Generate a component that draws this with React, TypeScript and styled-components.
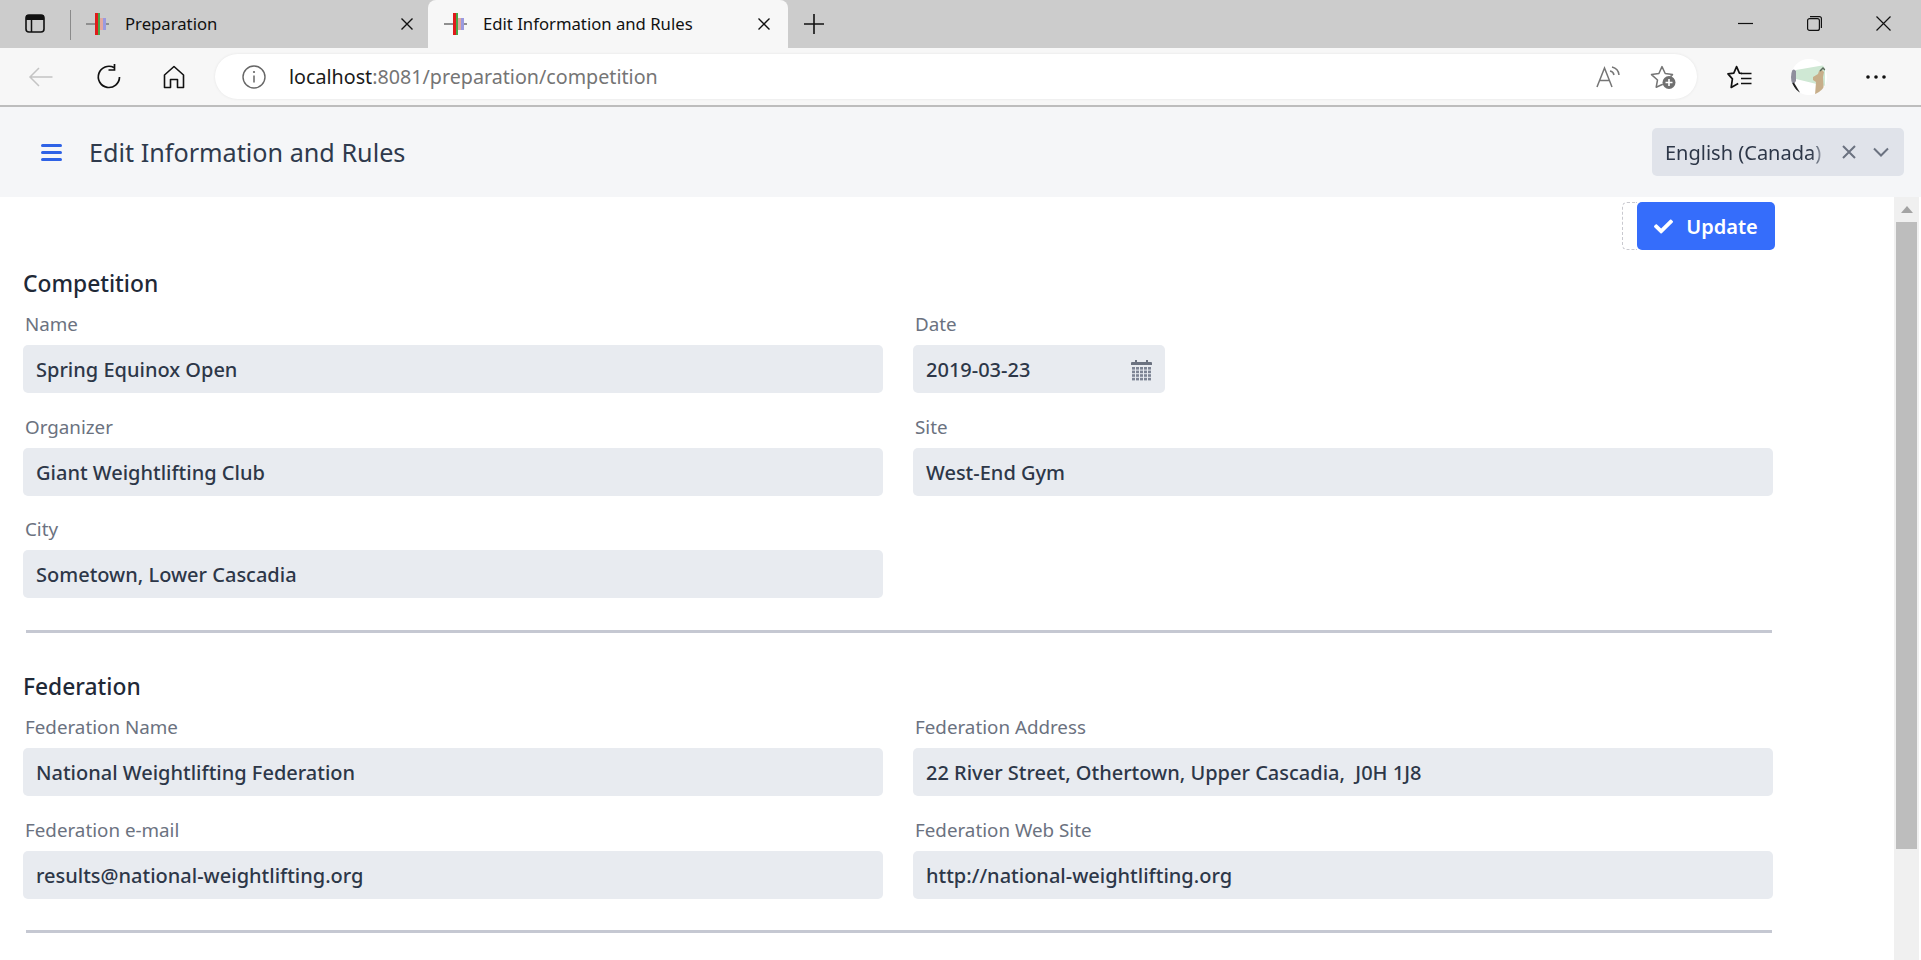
import React from "react";
import styled, { createGlobalStyle } from "styled-components";
import { FaCheck } from "react-icons/fa";

const uiFont = `"Noto Sans", "Open Sans", sans-serif`;

const GlobalStyle = createGlobalStyle`
  html, body {
    margin: 0;
    padding: 0;
    background: #fff;
    overflow: hidden;
  }
  * {
    box-sizing: border-box;
  }
`;

const Page = styled.div`
  width: 100%;
  height: 960px;
  display: flex;
  flex-direction: column;
  overflow: hidden;
  font-family: ${uiFont};
`;

/* ---- browser chrome ---- */

const TabStrip = styled.div`
  height: 48px;
  flex: none;
  display: flex;
  align-items: stretch;
  background: #cccccc;
  padding-left: 25px;
`;

const ChromeGlyph = styled.svg<{ $w: number; $h: number }>`
  width: ${(p) => p.$w}px;
  height: ${(p) => p.$h}px;
  flex: none;
  display: block;
`;

const SidebarSlot = styled.div`
  display: flex;
  align-items: center;
  width: 45px;
  position: relative;
  top: -1px;
`;

const TabDivider = styled.div`
  width: 1px;
  height: 30px;
  margin-top: 10px;
  background: #8a8a8a;
`;

const Tab = styled.div<{ $active?: boolean }>`
  display: flex;
  align-items: center;
  height: 48px;
  border-radius: 8px 8px 0 0;
  background: ${(p) => (p.$active ? "#f7f7f7" : "transparent")};
  width: ${(p) => (p.$active ? "360px" : "357px")};
  padding-left: ${(p) => (p.$active ? "16px" : "15px")};
  color: #111;
  font-size: 16.7px;
`;

const TabTitle = styled.span<{ $width: number }>`
  margin-left: 15px;
  width: ${(p) => p.$width}px;
  white-space: nowrap;
  position: relative;
  top: -1px;
`;

const NewTab = styled.div`
  display: flex;
  align-items: center;
  padding-left: 15px;
`;

const WindowControls = styled.div`
  margin-left: auto;
  display: flex;
  align-items: center;
  width: 195px;
  padding-left: 12px;
  gap: 54px;
  position: relative;
  top: -1px;
`;

const Toolbar = styled.div`
  height: 59px;
  flex: none;
  display: flex;
  align-items: flex-start;
  background: #f7f7f7;
  border-bottom: 2px solid #bdbdbd;
  padding-left: 28px;
  padding-top: 6px;
`;

const NavButton = styled.div<{ $w: number }>`
  width: ${(p) => p.$w}px;
  height: 45px;
  flex: none;
  display: flex;
  align-items: center;
`;

const AddressBar = styled.div`
  width: 1482px;
  height: 45px;
  flex: none;
  display: flex;
  align-items: center;
  background: #fff;
  border-radius: 23px;
  padding-left: 27px;
  box-shadow: 0 0 3px rgba(0, 0, 0, 0.08);
`;

const UrlText = styled.div`
  margin-left: 23px;
  font-size: 19.7px;
  color: #757575;
  white-space: nowrap;
  flex: 1;
  b {
    font-weight: 400;
    color: #1a1a1a;
  }
`;

const AddressActions = styled.div`
  display: flex;
  align-items: center;
  gap: 30px;
  padding-right: 21px;
`;

const ToolbarRight = styled.div`
  display: flex;
  align-items: center;
  height: 45px;
  padding-left: 30px;
  gap: 39px;
`;

const Avatar = styled.svg`
  width: 36px;
  height: 36px;
  flex: none;
  display: block;
`;

/* ---- app header ---- */

const AppHeader = styled.header`
  height: 90px;
  flex: none;
  display: flex;
  align-items: center;
  background: #f5f6f8;
  padding: 0 17px 0 41px;
`;

const Burger = styled.div`
  width: 21px;
  height: 17px;
  flex: none;
  display: flex;
  flex-direction: column;
  justify-content: space-between;
  span {
    display: block;
    height: 3px;
    border-radius: 2px;
    background: #2e62e6;
  }
`;

const PageTitle = styled.h1`
  margin: 0 0 0 27px;
  font-size: 25.2px;
  line-height: 32px;
  font-weight: 400;
  color: #2f3a4c;
  white-space: nowrap;
`;

const LanguageSelect = styled.div`
  margin-left: auto;
  width: 252px;
  height: 48px;
  display: flex;
  align-items: center;
  background: #e0e3ea;
  border-radius: 5px;
  padding-left: 13px;
  color: #2d3748;
`;

const LanguageText = styled.span`
  width: 159px;
  flex: none;
  padding-top: 1px;
  font-size: 20px;
  white-space: nowrap;
  overflow: hidden;
  -webkit-mask-image: linear-gradient(to right, #000 92%, rgba(0, 0, 0, 0.25));
  mask-image: linear-gradient(to right, #000 92%, rgba(0, 0, 0, 0.25));
`;

const SelectIcons = styled.div`
  display: flex;
  align-items: center;
  gap: 17px;
  padding-left: 18px;
`;

/* ---- page body ---- */

const Body = styled.div`
  flex: 1;
  min-height: 0;
  display: flex;
`;

const Content = styled.main`
  flex: 1;
  min-width: 0;
  padding: 5px 0 0 23px;
`;

const Actions = styled.div`
  width: 1752px;
  display: flex;
  justify-content: flex-end;
`;

const DashedSlot = styled.div`
  width: 15px;
  height: 48px;
  border: 1px dashed #c9c9cf;
  border-right: none;
  border-radius: 5px 0 0 5px;
`;

const UpdateButton = styled.button`
  width: 138px;
  height: 48px;
  display: flex;
  align-items: center;
  justify-content: center;
  gap: 13px;
  border: none;
  border-radius: 5px;
  background: #356dfb;
  color: #fff;
  font-family: ${uiFont};
  font-size: 20px;
  font-weight: 600;
  padding: 0;
`;

const SectionTitle = styled.h2<{ $top: number }>`
  margin: ${(p) => p.$top}px 0 13px;
  font-size: 22.8px;
  line-height: 30px;
  font-weight: 500;
  color: #1f2937;
`;

const FieldGrid = styled.div`
  display: grid;
  grid-template-columns: 860px 860px;
  column-gap: 30px;
  row-gap: 21.5px;
`;

const Field = styled.div``;

const FieldLabel = styled.div`
  height: 24px;
  margin-bottom: 9px;
  padding-left: 2px;
  font-size: 18.8px;
  line-height: 24px;
  color: #6b7280;
`;

const FieldBox = styled.div<{ $narrow?: boolean }>`
  width: ${(p) => (p.$narrow ? "252px" : "100%")};
  height: 48px;
  display: flex;
  align-items: center;
  justify-content: space-between;
  background: #e8ebf0;
  border-radius: 5px;
  padding: 1px 13px 0;
  font-size: 20px;
  font-weight: 500;
  color: #2d3748;
  white-space: pre;
`;

const Divider = styled.hr`
  width: 1746px;
  height: 3px;
  margin: 31.5px 0 0 3px;
  border: none;
  background: #c5c8d2;
`;

/* ---- scrollbar ---- */

const ScrollTrack = styled.div`
  width: 25px;
  flex: none;
  margin-right: 2px;
  background: #f0f0f0;
  padding: 0 2px;
`;

const ScrollArrow = styled.div`
  height: 25px;
  display: flex;
  align-items: center;
  justify-content: center;
`;

const ScrollThumb = styled.div`
  height: 627px;
  background: #bdbdbd;
`;

const Favicon = () => (
  <ChromeGlyph $w={24} $h={26} viewBox="0 0 24 26">
    <rect x="0" y="12" width="23" height="2" fill="#8f8f8f" />
    <rect x="14" y="7" width="3" height="12" fill="#e2a9a0" />
    <rect x="17" y="7" width="3" height="12" fill="#9a9ae0" />
    <rect x="9" y="2" width="3" height="22" fill="#e01b1b" />
    <rect x="12" y="2" width="2" height="22" fill="#48a648" />
  </ChromeGlyph>
);

const TabClose = () => (
  <ChromeGlyph $w={14} $h={14} viewBox="0 0 14 14">
    <path d="M1.5 1.5l11 11M12.5 1.5l-11 11" stroke="#111" strokeWidth="1.4" fill="none" />
  </ChromeGlyph>
);

const fields = {
  competition: [
    { label: "Name", value: "Spring Equinox Open" },
    { label: "Date", value: "2019-03-23", date: true },
    { label: "Organizer", value: "Giant Weightlifting Club" },
    { label: "Site", value: "West-End Gym" },
    { label: "City", value: "Sometown, Lower Cascadia" },
  ],
  federation: [
    { label: "Federation Name", value: "National Weightlifting Federation" },
    { label: "Federation Address", value: "22 River Street, Othertown, Upper Cascadia,  J0H 1J8" },
    { label: "Federation e-mail", value: "results@national-weightlifting.org" },
    { label: "Federation Web Site", value: "http://national-weightlifting.org" },
  ],
};

const CalendarIcon = () => (
  <ChromeGlyph $w={21} $h={22} viewBox="0 0 21 22">
    <path d="M1 3h19a1 1 0 0 1 1 1v2H0V4a1 1 0 0 1 1-1z" fill="#6b7280" />
    <rect x="4" y="1" width="2" height="3" fill="#6b7280" />
    <rect x="15" y="1" width="2" height="3" fill="#6b7280" />
    {[0, 1, 2, 3].map((row) =>
      [0, 1, 2, 3, 4].map((col) => (
        <rect key={`${row}-${col}`} x={1 + col * 4} y={8 + row * 3.6} width="3" height="2.6" fill="#7d8494" />
      ))
    )}
  </ChromeGlyph>
);

type FieldItem = { label: string; value: string; date?: boolean };

const FormField = ({ item }: { item: FieldItem }) => (
  <Field>
    <FieldLabel>{item.label}</FieldLabel>
    <FieldBox $narrow={item.date}>
      <span>{item.value}</span>
      {item.date && <CalendarIcon />}
    </FieldBox>
  </Field>
);

export default function App() {
  return (
    <>
      <GlobalStyle />
      <Page>
        <TabStrip>
          <SidebarSlot>
            <ChromeGlyph $w={20} $h={19} viewBox="0 0 20 19">
              <rect x="1" y="1" width="18" height="17" rx="3" fill="none" stroke="#111" strokeWidth="1.6" />
              <path d="M1 2.5A1.5 1.5 0 0 1 2.5 1h15A1.5 1.5 0 0 1 19 2.5V6H1z" fill="#111" />
              <path d="M6.5 6v12" stroke="#111" strokeWidth="1.5" />
            </ChromeGlyph>
          </SidebarSlot>
          <TabDivider />
          <Tab>
            <Favicon />
            <TabTitle $width={275}>Preparation</TabTitle>
            <TabClose />
          </Tab>
          <Tab $active>
            <Favicon />
            <TabTitle $width={274}>Edit Information and Rules</TabTitle>
            <TabClose />
          </Tab>
          <NewTab>
            <ChromeGlyph $w={22} $h={22} viewBox="0 0 22 22">
              <path d="M11 1v20M1 11h20" stroke="#111" strokeWidth="1.6" fill="none" />
            </ChromeGlyph>
          </NewTab>
          <WindowControls>
            <ChromeGlyph $w={15} $h={15} viewBox="0 0 15 15">
              <path d="M0 7.5h15" stroke="#111" strokeWidth="1.2" />
            </ChromeGlyph>
            <ChromeGlyph $w={15} $h={15} viewBox="0 0 15 15">
              <rect x="0.6" y="2.6" width="11.8" height="11.8" rx="2" fill="none" stroke="#111" strokeWidth="1.2" />
              <path d="M3 .6h9.4a2 2 0 0 1 2 2V12" fill="none" stroke="#111" strokeWidth="1.2" />
            </ChromeGlyph>
            <ChromeGlyph $w={15} $h={15} viewBox="0 0 15 15">
              <path d="M.5.5l14 14M14.5.5l-14 14" stroke="#111" strokeWidth="1.2" fill="none" />
            </ChromeGlyph>
          </WindowControls>
        </TabStrip>

        <Toolbar>
          <NavButton $w={68}>
            <ChromeGlyph $w={25} $h={22} viewBox="0 0 25 22">
              <path d="M24.5 11H2M11 2l-9 9 9 9" fill="none" stroke="#c4c4c4" strokeWidth="1.5" />
            </ChromeGlyph>
          </NavButton>
          <NavButton $w={67}>
            <ChromeGlyph $w={25} $h={26} viewBox="0 0 25 26">
              <path d="M18 3.6A10.6 10.6 0 1 0 23.5 13" fill="none" stroke="#111" strokeWidth="1.7" />
              <path d="M18.5 0v6h-6" fill="none" stroke="#111" strokeWidth="1.7" />
            </ChromeGlyph>
          </NavButton>
          <NavButton $w={52}>
            <ChromeGlyph $w={22} $h={24} viewBox="0 0 22 24">
              <path d="M1.5 10L11 1.5 20.5 10v12.5h-6v-8h-7v8h-6z" fill="none" stroke="#111" strokeWidth="1.6" strokeLinejoin="round" />
            </ChromeGlyph>
          </NavButton>
          <AddressBar>
            <ChromeGlyph $w={24} $h={24} viewBox="0 0 24 24">
              <circle cx="12" cy="12" r="11" fill="none" stroke="#666" strokeWidth="1.4" />
              <path d="M12 10.5v7" stroke="#666" strokeWidth="1.5" />
              <circle cx="12" cy="7" r="1.1" fill="#666" />
            </ChromeGlyph>
            <UrlText>
              <b>localhost</b>:8081/preparation/competition
            </UrlText>
            <AddressActions>
              <ChromeGlyph $w={24} $h={23} viewBox="0 0 24 23">
                <path d="M1 22L8.5 3 16 22M3.8 15.5h9.4" fill="none" stroke="#757575" strokeWidth="1.5" />
                <path d="M14 6a5 5 0 0 1 4 4M16 2a9 9 0 0 1 7 8" fill="none" stroke="#757575" strokeWidth="1.5" />
              </ChromeGlyph>
              <ChromeGlyph $w={26} $h={25} viewBox="0 0 26 25">
                <path
                  d="M12.8 20.2L6.2 23.2l1.3-7.2L1.5 10.6l7.4-1.1L12 2.6l3.2 6.9 7.3 1.1-2 2"
                  fill="none"
                  stroke="#757575"
                  strokeWidth="1.5"
                  strokeLinejoin="round"
                />
                <circle cx="19" cy="18.5" r="6.5" fill="#6f6f6f" />
                <path d="M19 15v7M15.5 18.5h7" stroke="#fff" strokeWidth="1.6" />
              </ChromeGlyph>
            </AddressActions>
          </AddressBar>
          <ToolbarRight>
            <ChromeGlyph $w={25} $h={24} viewBox="0 0 25 24">
              <path
                d="M15 8.5l-2.6-.4L9.6 1.6 6.8 8.1 1 8.9l4.4 5L4.2 22.4l7-3.8"
                fill="none"
                stroke="#111"
                strokeWidth="1.7"
                strokeLinejoin="round"
              />
              <path d="M14 8.5h10.5M14 13.5h10.5M14 18.5h10.5" stroke="#111" strokeWidth="1.7" />
            </ChromeGlyph>
            <Avatar viewBox="0 0 36 36">
              <clipPath id="avatar-clip">
                <circle cx="18" cy="18" r="18" />
              </clipPath>
              <g clipPath="url(#avatar-clip)">
                <rect width="36" height="36" fill="#fff" />
                <path d="M5 11L34 6v21L5 20z" fill="#cfe8d4" />
                <path d="M0 12q3-3 5 0v10q-2 4-5 2z" fill="#8f8f9c" />
                <path d="M2 24l6 10" stroke="#222" strokeWidth="2.2" />
                <path d="M22 18l5-3 1-3 3-1 2 2-1 5 1 18h-9l1-13-3-2z" fill="#c7ae8a" />
                <path d="M29 12l3-3 2 2" fill="none" stroke="#5d6b5d" strokeWidth="1.5" />
              </g>
            </Avatar>
            <ChromeGlyph $w={20} $h={4} viewBox="0 0 20 4">
              <circle cx="2" cy="2" r="1.8" fill="#111" />
              <circle cx="10" cy="2" r="1.8" fill="#111" />
              <circle cx="18" cy="2" r="1.8" fill="#111" />
            </ChromeGlyph>
          </ToolbarRight>
        </Toolbar>

        <AppHeader>
          <Burger>
            <span />
            <span />
            <span />
          </Burger>
          <PageTitle>Edit Information and Rules</PageTitle>
          <LanguageSelect>
            <LanguageText>English (Canada)</LanguageText>
            <SelectIcons>
              <ChromeGlyph $w={14} $h={14} viewBox="0 0 14 14">
                <path d="M1 1l12 12M13 1L1 13" stroke="#6b7280" strokeWidth="2" fill="none" />
              </ChromeGlyph>
              <ChromeGlyph $w={16} $h={10} viewBox="0 0 16 10">
                <path d="M1 1.5l7 7 7-7" stroke="#6b7280" strokeWidth="2" fill="none" />
              </ChromeGlyph>
            </SelectIcons>
          </LanguageSelect>
        </AppHeader>

        <Body>
          <Content>
            <Actions>
              <DashedSlot />
              <UpdateButton>
                <FaCheck size={19} />
                Update
              </UpdateButton>
            </Actions>
            <SectionTitle $top={19}>Competition</SectionTitle>
            <FieldGrid>
              {fields.competition.map((item) => (
                <FormField key={item.label} item={item} />
              ))}
            </FieldGrid>
            <Divider />
            <SectionTitle $top={39.5}>Federation</SectionTitle>
            <FieldGrid>
              {fields.federation.map((item) => (
                <FormField key={item.label} item={item} />
              ))}
            </FieldGrid>
            <Divider />
          </Content>
          <ScrollTrack>
            <ScrollArrow>
              <ChromeGlyph $w={12} $h={7} viewBox="0 0 12 7">
                <path d="M6 0l6 7H0z" fill="#a3a3a3" />
              </ChromeGlyph>
            </ScrollArrow>
            <ScrollThumb />
          </ScrollTrack>
        </Body>
      </Page>
    </>
  );
}
